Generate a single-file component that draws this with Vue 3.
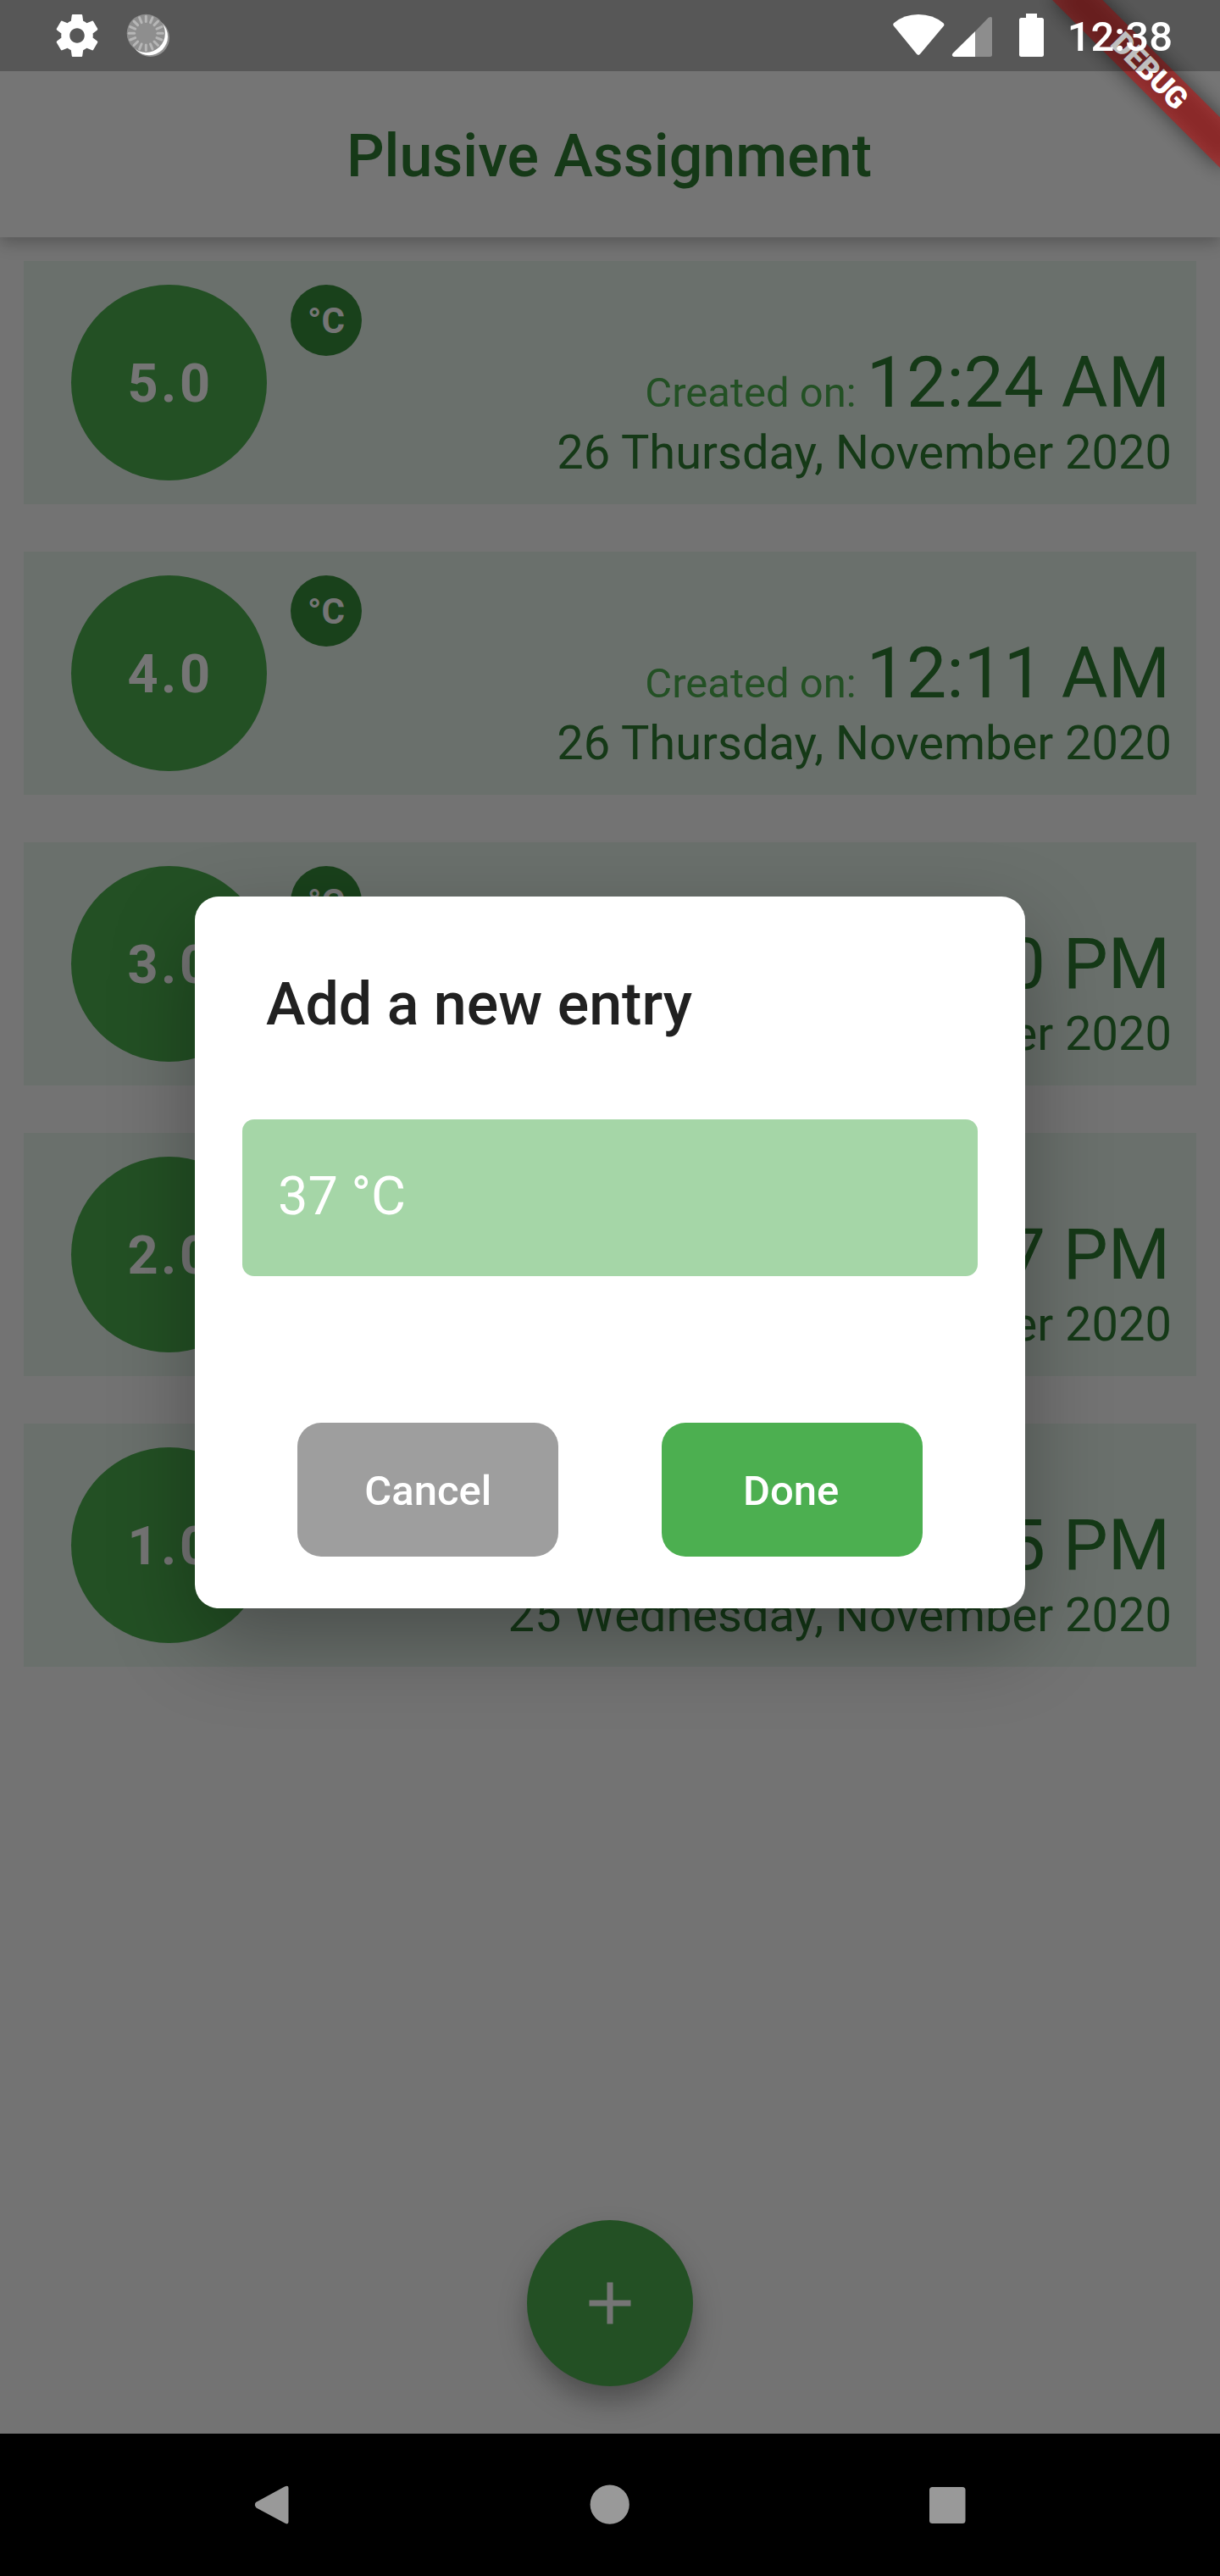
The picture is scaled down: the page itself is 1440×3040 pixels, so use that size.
<script setup>
const entries = [
  { value: '5.0', time: '12:24 AM', date: '26 Thursday, November 2020' },
  { value: '4.0', time: '12:11 AM', date: '26 Thursday, November 2020' },
  { value: '3.0', time: '11:50 PM', date: '25 Wednesday, November 2020' },
  { value: '2.0', time: '11:47 PM', date: '25 Wednesday, November 2020' },
  { value: '1.0', time: '11:45 PM', date: '25 Wednesday, November 2020' },
]
const ticks = Array.from({ length: 16 }, (_, i) => i * 22.5)
</script>

<template>
  <div class="device">
    <main class="app">
      <header class="app-bar"><h1>Plusive Assignment</h1></header>
      <ul class="list">
        <li v-for="entry in entries" :key="entry.value" class="entry">
          <div class="value">{{ entry.value }}</div>
          <div class="unit">°C</div>
          <div class="meta">
            <div class="created"><span class="label">Created on:&nbsp;</span><span>{{ entry.time }}</span></div>
            <div class="date">{{ entry.date }}</div>
          </div>
        </li>
      </ul>
      <button class="fab" aria-label="Add">
        <svg width="84" height="84" viewBox="0 0 24 24"><path fill="#fff" d="M19 13h-6v6h-2v-6H5v-2h6V5h2v6h6v2z" /></svg>
      </button>
    </main>

    <div class="barrier">
      <section class="dialog">
        <h2>Add a new entry</h2>
        <div class="field">37 °C</div>
        <div class="actions">
          <button class="btn cancel">Cancel</button>
          <button class="btn done">Done</button>
        </div>
      </section>
    </div>

    <div class="banner">
      <div class="banner-shadow"></div>
      <div class="ribbon">DEBUG</div>
    </div>

    <div class="status-bar">
      <svg class="gear" width="60" height="60" viewBox="0 0 24 24"><path fill="#fff" d="M19.43 12.98c.04-.32.07-.64.07-.98s-.03-.66-.07-.98l2.11-1.65c.19-.15.24-.42.12-.64l-2-3.46c-.12-.22-.39-.3-.61-.22l-2.49 1c-.52-.4-1.08-.73-1.69-.98l-.38-2.65C14.46 2.18 14.25 2 14 2h-4c-.25 0-.46.18-.49.42l-.38 2.65c-.61.25-1.17.59-1.69.98l-2.49-1c-.23-.09-.49 0-.61.22l-2 3.46c-.13.22-.07.49.12.64l2.11 1.65c-.04.32-.07.65-.07.98s.03.66.07.98l-2.11 1.65c-.19.15-.24.42-.12.64l2 3.46c.12.22.39.3.61.22l2.49-1c.52.4 1.08.73 1.69.98l.38 2.65c.03.24.24.42.49.42h4c.25 0 .46-.18.49-.42l.38-2.65c.61-.25 1.17-.59 1.69-.98l2.49 1c.23.09.49 0 .61-.22l2-3.46c.12-.22.07-.49-.12-.64l-2.11-1.65zM12 15.5c-1.93 0-3.5-1.57-3.5-3.5s1.57-3.5 3.5-3.5 3.5 1.57 3.5 3.5-1.57 3.5-3.5 3.5z" /></svg>
      <svg class="loader" width="52" height="52" viewBox="0 0 52 52">
        <circle cx="28.5" cy="28.5" r="22.5" fill="#929292" />
        <circle cx="27" cy="27.2" r="22" fill="#fff" />
        <circle cx="23.3" cy="23.3" r="22.6" fill="#8e8e8e" />
        <path v-for="a in ticks" :key="a" d="M23.3 3.2v6.4" :transform="`rotate(${a} 23.3 23.3)`" stroke="#b6b6b6" stroke-width="3" stroke-linecap="round" />
      </svg>
      <span class="grow"></span>
      <svg width="184" height="84" viewBox="0 0 184 84">
        <path fill="#fff" d="M1 27.200Q13 17 30 17T59.500 27.200Q61 28.800 60 30.500L32 63.800Q30 66 28 63.800L.8 30.500Q-.5 28.800 1 27.200Z" />
        <path fill="#8d8d8d" d="M97 37 112.500 21Q117 18.500 117 22V64.500Q117 67 114.500 67H97Z" />
        <path fill="#fff" d="M97 37V67H72Q68.500 66 70.500 63Z" />
        <path fill="#fff" d="M157 16h13v5h5.500q2.500 0 2.500 2.500v41q0 2.500-2.500 2.500h-24q-2.500 0-2.500-2.500v-41q0-2.500 2.500-2.500h5.500z" />
      </svg>
      <span class="clock">12:38</span>
    </div>

    <nav class="nav-bar">
      <svg width="50" height="50" viewBox="0 0 50 50"><path fill="#999" d="M7 22 41 3.500Q45.500 1.500 45.500 5V45Q45.500 48.500 42 47L7.500 28.500Q4.500 25.200 7 22Z" /></svg>
      <svg width="50" height="50" viewBox="0 0 50 50"><circle cx="24.700" cy="24.700" r="23.100" fill="#999" /></svg>
      <svg width="50" height="50" viewBox="0 0 50 50"><rect x="3" y="4" width="42.500" height="43" rx="3.500" fill="#999" /></svg>
    </nav>
  </div>
</template>

<style>
body { margin: 0; }
</style>

<style scoped>
* { box-sizing: border-box; }
.device {
  position: relative;
  display: flex;
  flex-direction: column;
  width: 1440px;
  height: 3040px;
  overflow: hidden;
  font-family: Roboto, sans-serif;
}
h1, h2, ul { margin: 0; padding: 0; }
button { border: 0; padding: 0; font-family: inherit; }
svg { display: block; flex: none; }

.app {
  flex: 1;
  display: flex;
  flex-direction: column;
  align-items: center;
  min-height: 0;
  padding-bottom: 56px;
  background: #fafafa;
}
.app-bar {
  display: flex;
  align-items: center;
  justify-content: center;
  width: 1440px;
  height: 280px;
  padding: 87px 2px 0 0;
  background: #fff;
  box-shadow: 0 6px 18px rgba(0, 0, 0, 0.25);
}
h1 {
  font-size: 70px;
  font-weight: 500;
  line-height: 82px;
  color: #2e7d32;
}
.list {
  display: flex;
  flex-direction: column;
  gap: 56px;
  width: 1384px;
  margin-top: 28px;
  list-style: none;
}
.entry {
  display: flex;
  align-items: flex-start;
  gap: 28px;
  height: 287px;
  padding: 28px 29px 28px 56px;
  background: #e6f3eb;
}
.value, .unit {
  display: flex;
  flex: none;
  align-items: center;
  justify-content: center;
  border-radius: 50%;
  color: #fff;
  font-weight: 700;
}
.value {
  width: 231px;
  height: 231px;
  padding: 2px 0 0 3px;
  background: #4caf50;
  font-size: 63px;
  letter-spacing: 3.5px;
}
.unit {
  width: 84px;
  height: 84px;
  background: #388e3c;
  font-size: 42px;
}
.meta {
  display: flex;
  flex: 1;
  flex-direction: column;
  align-items: flex-end;
  justify-content: flex-end;
  height: 231px;
  color: #2e7d32;
  white-space: nowrap;
}
.created {
  height: 98px;
  margin-right: 2px;
  font-size: 84px;
  line-height: 98px;
}
.label { color: #4caf50; font-size: 49px; line-height: 1; }
.date { font-size: 56px; line-height: 66px; }
.fab {
  display: flex;
  align-items: center;
  justify-content: center;
  width: 196px;
  height: 196px;
  margin-top: auto;
  border-radius: 50%;
  background: #4caf50;
  box-shadow: 0 18px 34px -2px rgba(0, 0, 0, 0.34);
}

.barrier {
  position: absolute;
  inset: 0 0 168px;
  display: flex;
  justify-content: center;
  align-items: flex-start;
  padding-top: 1058px;
  background: rgba(0, 0, 0, 0.54);
}
.dialog {
  display: flex;
  flex-direction: column;
  justify-content: space-between;
  width: 980px;
  height: 840px;
  padding: 86px 0 61px;
  border-radius: 28px;
  background: #fff;
  box-shadow: 0 38px 100px rgba(0, 0, 0, 0.31);
}
h2 {
  margin-left: 84px;
  font-size: 70px;
  font-weight: 500;
  line-height: 82px;
  color: #212121;
}
.field {
  height: 185px;
  margin: 95px 56px auto;
  padding-left: 42px;
  border-radius: 14px;
  background: #a5d6a7;
  color: #fff;
  font-size: 63px;
  line-height: 181px;
}
.actions {
  display: flex;
  justify-content: space-evenly;
}
.btn {
  width: 308px;
  height: 158px;
  padding-top: 2px;
  border-radius: 28px;
  color: #fff;
  font-size: 49px;
  font-weight: 500;
}
.cancel { background: #9e9e9e; }
.done { padding-right: 2px; background: #4caf50; }

/* Corner ribbon, rotated about the top right corner of the screen. */
.banner {
  position: absolute;
  top: 0;
  left: 1440px;
  width: 0;
  height: 0;
  transform: rotate(45deg);
}
.banner-shadow, .ribbon {
  position: absolute;
  left: -140px;
  top: 98px;
  width: 280px;
  height: 42px;
}
.banner-shadow { background: rgba(0, 0, 0, 0.5); filter: blur(12px); }
.ribbon {
  background: rgba(183, 28, 28, 0.63);
  color: #fff;
  font-size: 35.7px;
  font-weight: 900;
  letter-spacing: -0.8px;
  line-height: 41px;
  text-align: center;
}

.status-bar {
  position: absolute;
  inset: 0 0 auto;
  display: flex;
  align-items: center;
  height: 84px;
  padding: 0 56px 0 61px;
  background: rgba(0, 0, 0, 0.25);
}
.loader { margin-left: 28px; }
.grow { flex: 1; }
.clock {
  width: 125px;
  margin-left: 21px;
  padding-top: 3px;
  color: #fff;
  font-size: 49px;
  font-weight: 500;
  line-height: 84px;
  text-align: right;
}

.nav-bar {
  display: flex;
  align-items: center;
  justify-content: space-between;
  height: 168px;
  padding: 0 296px 0 295px;
  background: #000;
}
</style>
